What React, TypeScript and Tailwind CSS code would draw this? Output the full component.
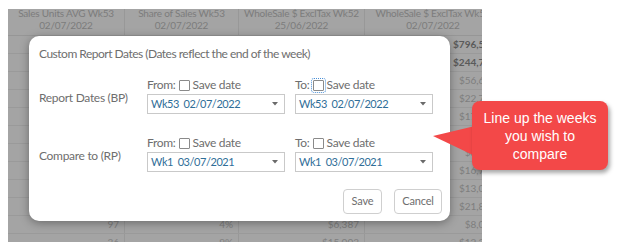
import type { ReactNode } from 'react';

type Cell = { text: string; bold?: boolean };

const headers = [
  ['Sales Units AVG Wk53', '02/07/2022'],
  ['Share of Sales Wk53', '02/07/2022'],
  ['WholeSale $ ExclTax Wk52', '25/06/2022'],
  ['WholeSale $ ExclTax Wk53', '02/07/2022']
];

const rows: Cell[][] = [
  [{ text: '1,204', bold: true }, { text: '100%', bold: true }, { text: '$781,220', bold: true }, { text: '$796,563', bold: true }],
  [{ text: '402', bold: true }, { text: '31%', bold: true }, { text: '$240,118', bold: true }, { text: '$244,731', bold: true }],
  [{ text: '88' }, { text: '7%' }, { text: '$55,902' }, { text: '$56,640' }],
  [{ text: '41' }, { text: '3%' }, { text: '$21,988' }, { text: '$22,706' }],
  [{ text: '33' }, { text: '2%' }, { text: '$16,870' }, { text: '$17,204' }],
  [{ text: '20' }, { text: '1%' }, { text: '$9,004' }, { text: '$9,118' }],
  [{ text: '18' }, { text: '1%' }, { text: '$8,330' }, { text: '$8,512' }],
  [{ text: '39' }, { text: '2%' }, { text: '$16,251' }, { text: '$16,712' }],
  [{ text: '30' }, { text: '2%' }, { text: '$12,877' }, { text: '$13,089' }],
  [{ text: '52' }, { text: '4%' }, { text: '$21,102' }, { text: '$21,834' }],
  [{ text: '97' }, { text: '4%' }, { text: '$6,387' }, { text: '$8,061' }],
  [{ text: '36' }, { text: '9%' }, { text: '$15,003' }, { text: '$12,345' }]
];

const colClass = 'grid grid-cols-[117px_114px_126px_137px]';

function Checkbox({ focused }: { focused?: boolean }) {
  return (
    <span
      className={
        'mx-[3px] inline-block h-[11px] w-[11px] rounded-[1px] border border-[#8a8a8a] bg-white ' +
        (focused ? 'outline-1 outline-offset-1 outline-dotted outline-[#4a8fd6]' : '')
      }
    />
  );
}

function DateField({ label, value, focused }: { label: string; value: string; focused?: boolean }) {
  return (
    <div className="flex w-[138px] flex-col">
      <div className="flex h-[16px] items-center text-[12px] leading-[16px] tracking-[-0.3px] text-[#6e6e6e]">
        <span>{label}</span>
        <Checkbox focused={focused} />
        <span>Save date</span>
      </div>
      <div className="mt-[1px] flex h-[20px] items-center justify-between border border-[#c9c9c9] bg-white pl-[3px] pr-[6px] text-[11px] tracking-[-0.45px] text-[#2f6e98]">
        <span className="whitespace-pre">{value}</span>
        <svg width="6" height="4" viewBox="0 0 6 4">
          <path d="M0 0 L6 0 L3 3.5 Z" fill="#6a6a6a" />
        </svg>
      </div>
    </div>
  );
}

function DateRow({ title, from, to, focusTo }: { title: string; from: string; to: string; focusTo?: boolean }) {
  return (
    <div className="flex items-center">
      <div className="w-[108px] pt-[5px] text-[12px] tracking-[-0.3px] text-[#6e6e6e]">{title}</div>
      <DateField label="From:" value={from} />
      <div className="ml-[10px]">
        <DateField label="To:" value={to} focused={focusTo} />
      </div>
    </div>
  );
}

function Button({ children, width }: { children: ReactNode; width: string }) {
  return (
    <button type="button" className={'flex h-[25px] items-center justify-center rounded-[4px] border border-[#cfcfcf] bg-white text-[11px] tracking-[-0.2px] text-[#6e6e6e] ' + width}>
      {children}
    </button>
  );
}

export default function App() {
  return (
    <div className="relative h-[247px] w-[617px] overflow-hidden bg-white font-['Lato',sans-serif]">
      {/* dimmed report table behind the dialog */}
      <div className="ml-[8px] pt-[9px]">
        <div className="h-[233px] w-[474px] overflow-hidden bg-[#a4a4a4]">
          <div className={colClass + ' h-[27px] overflow-hidden border-b border-[#969696]'}>
            {headers.map((h, i) => (
              <div key={i} className="flex h-[26px] flex-col items-center justify-end overflow-hidden whitespace-nowrap border-r border-[#989898] pb-[4px] text-[10px] leading-[12px] tracking-[-0.2px] text-[#7c7c7c]">
                <span>{h[0]}</span>
                <span>{h[1]}</span>
              </div>
            ))}
          </div>
          {rows.map((r, ri) => (
            <div key={ri} className={colClass + ' h-[18px] border-b border-[#9a9a9a]'}>
              {r.map((c, ci) => (
                <div
                  key={ci}
                  className={
                    'flex items-center justify-end whitespace-nowrap border-r border-[#989898] pr-[5px] text-[10px] ' +
                    (c.bold ? 'font-bold text-[#5a5a5a]' : 'text-[#7e7e7e]')
                  }
                >
                  {c.text}
                </div>
              ))}
            </div>
          ))}
        </div>
      </div>

      {/* dialog */}
      <div className="absolute left-[29px] top-[36px] flex h-[185px] w-[421px] flex-col rounded-[10px] bg-white pl-[10px] pt-[8px] shadow-[0_2px_10px_rgba(0,0,0,0.35)]">
        <div className="h-[20px] text-[12px] leading-[20px] tracking-[-0.5px] text-[#6e6e6e]">Custom Report Dates (Dates reflect the end of the week)</div>
        <div className="mt-[13px]">
          <DateRow title="Report Dates (BP)" from="Wk53  02/07/2022" to="Wk53  02/07/2022" focusTo />
        </div>
        <div className="mt-[21px]">
          <DateRow title="Compare to (RP)" from="Wk1  03/07/2021" to="Wk1  03/07/2021" />
        </div>
        <div className="mt-[17px] flex justify-end gap-[12px] pr-[8px]">
          <Button width="w-[39px]">Save</Button>
          <Button width="w-[48px]">Cancel</Button>
        </div>
      </div>

      {/* callout */}
      <svg className="absolute left-[432px] top-[124px]" width="44" height="34" viewBox="0 0 44 34">
        <polygon points="1,12 43,2 43,32" fill="#f34848" />
      </svg>
      <div className="absolute left-[472px] top-[101px] flex h-[69px] w-[136px] flex-col items-center justify-center rounded-[8px] bg-[#f34848] font-['Liberation_Sans',Arial,sans-serif] text-[14px] leading-[18px] text-white shadow-[2px_3px_4px_rgba(0,0,0,0.35)]">
        <span>Line up the weeks</span>
        <span>you wish to</span>
        <span>compare</span>
      </div>
    </div>
  );
}
